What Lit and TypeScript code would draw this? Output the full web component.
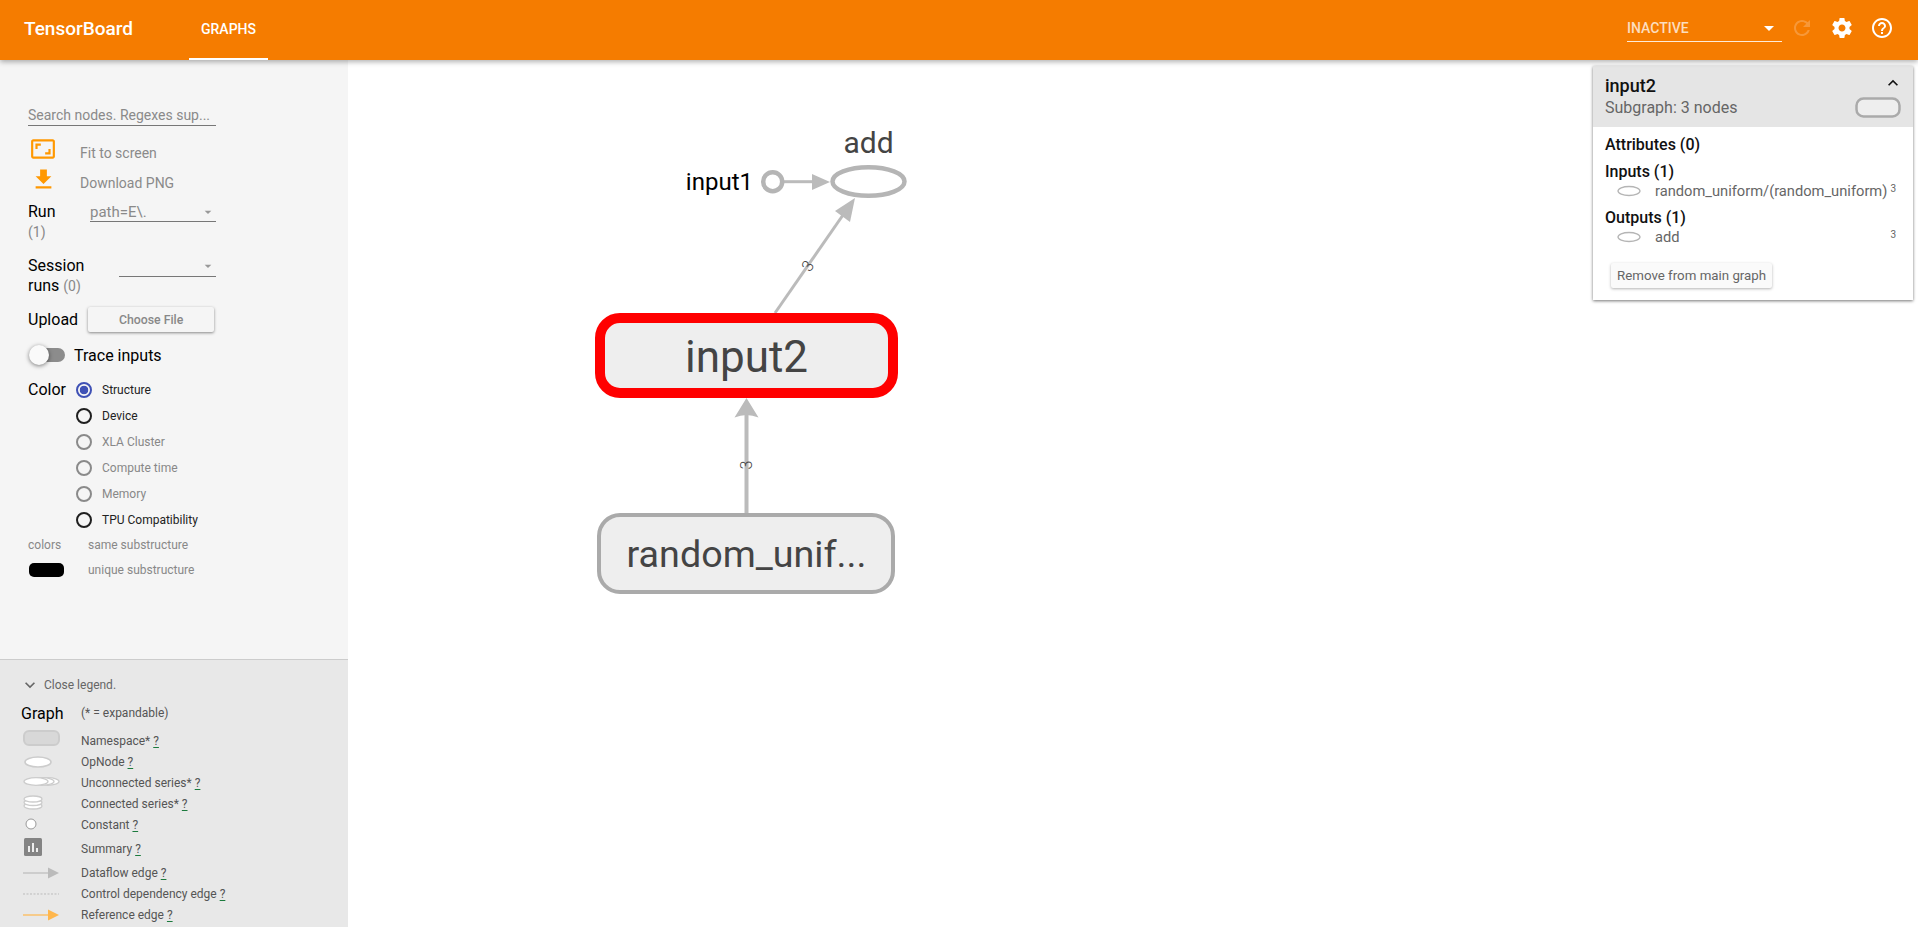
import { LitElement, css, html, svg } from "lit";
import { customElement } from "lit/decorators.js";

const ICONS = {
  settings:
    "M19.43 12.98c.04-.32.07-.64.07-.98s-.03-.66-.07-.98l2.11-1.65c.19-.15.24-.42.12-.64l-2-3.46c-.12-.22-.39-.3-.61-.22l-2.49 1c-.52-.4-1.08-.73-1.69-.98l-.38-2.65C14.46 2.18 14.25 2 14 2h-4c-.25 0-.46.18-.49.42l-.38 2.65c-.61.25-1.17.59-1.69.98l-2.49-1c-.23-.09-.49 0-.61.22l-2 3.46c-.13.22-.07.49.12.64l2.11 1.65c-.04.32-.07.65-.07.98s.03.66.07.98l-2.11 1.65c-.19.15-.24.42-.12.64l2 3.46c.12.22.39.3.61.22l2.49-1c.52.4 1.08.73 1.69.98l.38 2.65c.03.24.24.42.49.42h4c.25 0 .46-.18.49-.42l.38-2.65c.61-.25 1.17-.59 1.69-.98l2.49 1c.23.09.49 0 .61-.22l2-3.46c.12-.22.07-.49-.12-.64l-2.11-1.65zM12 15.5c-1.93 0-3.5-1.57-3.5-3.5s1.57-3.5 3.5-3.5 3.5 1.57 3.5 3.5-1.57 3.5-3.5 3.5z",
  help: "M11 18h2v-2h-2v2zm1-16C6.48 2 2 6.48 2 12s4.48 10 10 10 10-4.48 10-10S17.52 2 12 2zm0 18c-4.41 0-8-3.59-8-8s3.59-8 8-8 8 3.59 8 8-3.59 8-8 8zm0-14c-2.21 0-4 1.79-4 4h2c0-1.1.9-2 2-2s2 .9 2 2c0 2-3 1.75-3 5h2c0-2.25 3-2.5 3-5 0-2.21-1.79-4-4-4z",
  refresh:
    "M17.65 6.35C16.2 4.9 14.21 4 12 4c-4.42 0-7.99 3.58-7.99 8s3.57 8 7.99 8c3.73 0 6.84-2.55 7.73-6h-2.08c-.82 2.33-3.04 4-5.65 4-3.31 0-6-2.69-6-6s2.69-6 6-6c1.66 0 3.14.69 4.22 1.78L13 11h7V4l-2.35 2.35z",
  fit: "M19 12h-2v3h-3v2h5v-5zM7 9h3V7H5v5h2V9zm14-6H3c-1.1 0-2 .9-2 2v14c0 1.1.9 2 2 2h18c1.1 0 2-.9 2-2V5c0-1.1-.9-2-2-2zm0 16.01H3V4.99h18v14.02z",
  download: "M19 9h-4V3H9v6H5l7 7 7-7zM5 18v2h14v-2H5z",
  down: "M7.41 8.59L12 13.17l4.59-4.58L18 10l-6 6-6-6 1.41-1.41z",
  up: "M7.41 15.41L12 10.83l4.59 4.58L18 14l-6-6-6 6z",
  caret: "M7 10l5 5 5-5z",
};

const icon = (d: string, size: number, cls = "") =>
  html`<svg class=${cls} width=${size} height=${size} viewBox="0 0 24 24" fill="currentColor"><path d=${d}></path></svg>`;

const RADIOS = [
  { label: "Structure", state: "checked" },
  { label: "Device", state: "" },
  { label: "XLA Cluster", state: "off" },
  { label: "Compute time", state: "off" },
  { label: "Memory", state: "off" },
  { label: "TPU Compatibility", state: "" },
];

const LEGEND = [
  {
    label: "Namespace*",
    h: 21,
    art: svg`<rect x="3" y="-1" width="35" height="14" rx="5" fill="#d8d8d8" stroke="#ccc" stroke-width="2"/>`,
  },
  {
    label: "OpNode",
    h: 21,
    art: svg`<ellipse cx="17" cy="9" rx="13" ry="5" fill="#fff" stroke="#ccc" stroke-width="1.600"/>`,
  },
  {
    label: "Unconnected series*",
    h: 21,
    art: svg`<g fill="#fff" stroke="#ccc" stroke-width="1.300"><ellipse cx="27" cy="7.500" rx="11" ry="3.800"/><ellipse cx="21" cy="7.500" rx="12" ry="3.800"/><ellipse cx="15" cy="7.500" rx="12" ry="3.800"/></g>`,
  },
  {
    label: "Connected series*",
    h: 21,
    art: svg`<g fill="#fff" stroke="#ccc" stroke-width="1.300"><ellipse cx="12" cy="11" rx="9" ry="3"/><ellipse cx="12" cy="7.500" rx="9" ry="3"/><ellipse cx="12" cy="4" rx="9" ry="3"/></g>`,
  },
  {
    label: "Constant",
    h: 21,
    art: svg`<circle cx="10" cy="8" r="5" fill="#fff" stroke="#999" stroke-width="1"/>`,
  },
  {
    label: "Summary",
    h: 27,
    art: svg`<rect x="3" y="-2" width="18" height="18" rx="1.500" fill="#848484"/><path d="M7 6h2v6H7zM11 3h2v9h-2zM15 8h2v4h-2z" fill="#eee"/>`,
  },
  {
    label: "Dataflow edge",
    h: 21,
    art: svg`<path d="M2 9h27" stroke="#bbb" stroke-width="1.200"/><path d="M38 9l-11-5.500 0 11z" fill="#bbb"/>`,
  },
  {
    label: "Control dependency edge",
    h: 21,
    art: svg`<path d="M2 9h36" stroke="#bbb" stroke-width="1" stroke-dasharray="2 1.500"/>`,
  },
  {
    label: "Reference edge",
    h: 21,
    art: svg`<path d="M2 9h27" stroke="#ffb74d" stroke-width="1.200"/><path d="M38 9l-11-5.500 0 11z" fill="#ffb74d"/>`,
  },
];

@customElement("app-root")
export class AppRoot extends LitElement {
  static styles = css`
    :host {
      display: flex;
      flex-direction: column;
      height: 927px;
      overflow: hidden;
      font-family: Roboto, sans-serif;
      background: #fff;
    }
    .toolbar {
      position: relative;
      z-index: 2;
      flex: none;
      display: flex;
      align-items: center;
      height: 60px;
      padding-left: 24px;
      background: #f57c00;
      color: #fff;
      box-shadow: 0 2px 5px rgba(0, 0, 0, 0.3);
    }
    .brand {
      width: 165px;
      margin-bottom: 4px;
      font-size: 19px;
      font-weight: 500;
    }
    .tab {
      display: flex;
      align-items: center;
      justify-content: center;
      width: 79px;
      height: 58px;
      border-bottom: 2px solid #fff;
      font-size: 14px;
      font-weight: 500;
    }
    .top-right {
      display: flex;
      align-items: center;
      margin-left: auto;
    }
    .inactive {
      display: flex;
      align-items: center;
      justify-content: space-between;
      box-sizing: border-box;
      width: 155px;
      height: 28px;
      margin-top: -4px;
      border-bottom: 1px solid rgba(255, 255, 255, 0.85);
      font-size: 14px;
      font-weight: 500;
      color: rgba(255, 255, 255, 0.75);
    }
    .inactive svg {
      color: #fff;
      margin-right: 1px;
    }
    .refresh {
      margin: 0 16px 0 8px;
      color: rgba(255, 255, 255, 0.22);
    }
    .gear {
      margin: 0 16px 0 0;
    }
    .helpicon {
      margin-right: 24px;
    }
    .main {
      flex: 1;
      display: flex;
      min-height: 0;
    }
    .side {
      flex: none;
      width: 348px;
      display: flex;
      flex-direction: column;
      background: #f5f5f5;
    }
    .controls {
      flex: 1;
      padding: 46px 132px 0 28px;
      min-height: 0;
    }
    .search {
      height: 19px;
      border-bottom: 1px solid #777;
      font-size: 14px;
      line-height: 18px;
      color: #8a8a8a;
      white-space: nowrap;
    }
    .actions {
      margin-top: 12px;
    }
    .action {
      display: flex;
      align-items: center;
      height: 30px;
      font-size: 14px;
      color: #8a8a8a;
    }
    .action .ic {
      flex: none;
      display: flex;
      justify-content: center;
      width: 30px;
      margin-right: 22px;
      margin-bottom: 8px;
      color: #ff9800;
    }
    .run {
      display: flex;
      margin-top: 4px;
      font-size: 16px;
      color: #000;
    }
    .run-label {
      line-height: 20px;
      flex: none;
    }
    .count {
      font-size: 14px;
      color: #888;
    }
    .select {
      display: flex;
      align-items: center;
      justify-content: space-between;
      box-sizing: border-box;
      height: 20px;
      margin-left: auto;
      border-bottom: 1px solid #777;
      font-size: 15px;
      color: #8a8a8a;
    }
    .select svg {
      color: #999;
    }
    .run .select {
      width: 126px;
    }
    .session {
      margin-top: 14px;
    }
    .session .select {
      width: 97px;
      height: 21px;
      justify-content: flex-end;
    }
    .upload {
      display: flex;
      align-items: center;
      margin-top: 10px;
      height: 27px;
      font-size: 16px;
      color: #000;
    }
    .choose {
      display: flex;
      align-items: center;
      justify-content: center;
      flex: none;
      width: 126px;
      height: 25px;
      margin-left: 10px;
      background: #f5f5f5;
      border-radius: 2px;
      font-size: 12.300px;
      font-weight: 500;
      color: #888;
      box-shadow: 0 1px 3px rgba(0, 0, 0, 0.45);
    }
    .trace {
      display: flex;
      align-items: center;
      margin-top: 12px;
      height: 20px;
      font-size: 16px;
      color: #000;
      white-space: nowrap;
    }
    .track {
      position: relative;
      flex: none;
      width: 35px;
      height: 14px;
      margin-left: 2px;
      border-radius: 7px;
      background: #8c8c8c;
    }
    .thumb {
      position: absolute;
      left: -1px;
      top: -3px;
      width: 20px;
      height: 20px;
      border-radius: 50%;
      background: #fafafa;
      box-shadow: 0 1px 4px rgba(0, 0, 0, 0.5);
    }
    .trace span {
      margin-left: 9px;
    }
    .color {
      display: flex;
      margin-top: 12px;
    }
    .color-label {
      flex: none;
      width: 48px;
      font-size: 16px;
      line-height: 26px;
      color: #000;
    }
    .radio {
      display: flex;
      align-items: center;
      height: 26px;
      font-size: 12px;
      color: #222;
      white-space: nowrap;
    }
    .radio.off {
      color: #888;
    }
    .dot {
      flex: none;
      box-sizing: border-box;
      width: 16px;
      height: 16px;
      margin-right: 10px;
      border: 2px solid #1f1f1f;
      border-radius: 50%;
    }
    .radio.off .dot {
      border-color: #8a8a8a;
    }
    .radio.checked .dot {
      border-color: #3f51b5;
      background: radial-gradient(circle, #3f51b5 0 4px, transparent 4.600px);
    }
    .substs {
      margin-top: -1px;
    }
    .subst {
      display: flex;
      align-items: center;
      height: 25px;
      font-size: 12px;
      color: #888;
      white-space: nowrap;
    }
    .subst-key {
      flex: none;
      width: 60px;
    }
    .pill {
      flex: none;
      width: 35px;
      height: 14px;
      margin-left: 1px;
      margin-right: 24px;
      border-radius: 5px;
      background: #000;
    }
    .legend {
      flex: none;
      box-sizing: border-box;
      height: 268px;
      padding: 17px 0 0 21px;
      border-top: 1px solid #ccc;
      background: #e8e8e8;
      font-size: 12px;
      color: #555;
      overflow: hidden;
    }
    .close {
      display: flex;
      align-items: center;
      height: 16px;
      margin-left: -1px;
      color: #666;
    }
    .close svg {
      margin-right: 4px;
    }
    .graph-row {
      display: flex;
      align-items: center;
      height: 24px;
      margin-top: 8px;
      margin-bottom: 5.500px;
    }
    .graph-row b {
      width: 60px;
      font-size: 16px;
      font-weight: 400;
      color: #000;
    }
    .row {
      display: flex;
      align-items: center;
    }
    .row svg {
      flex: none;
      width: 60px;
      height: 18px;
      overflow: visible;
    }
    .row u {
      text-decoration-color: #1b7a3d;
      text-underline-offset: 2px;
    }
    .canvas {
      position: relative;
      flex: 1;
      min-width: 0;
      background: #fff;
    }
    .graph {
      display: block;
      width: 100%;
      height: 100%;
      font-family: Roboto, sans-serif;
    }
    .panel {
      position: absolute;
      top: 6px;
      right: 5px;
      width: 320px;
      height: 234px;
      background: #fff;
      box-shadow: 0 1px 3px rgba(0, 0, 0, 0.55);
    }
    .panel-head {
      position: relative;
      box-sizing: border-box;
      height: 61px;
      padding: 9px 12px;
      background: #e5e5e5;
    }
    .panel-title {
      font-size: 18px;
      font-weight: 500;
      line-height: 22px;
      color: #111;
    }
    .panel-sub {
      font-size: 16px;
      line-height: 22px;
      color: #666;
    }
    .panel-up {
      position: absolute;
      top: 7px;
      right: 10px;
      color: #111;
    }
    .panel-node {
      position: absolute;
      top: 31px;
      right: 12px;
    }
    .panel-body {
      padding: 9px 12px 0;
    }
    .sec {
      font-size: 16px;
      font-weight: 500;
      line-height: 18px;
      color: #111;
    }
    .sec + .sec,
    .item + .sec {
      margin-top: 9px;
    }
    .item {
      display: flex;
      align-items: center;
      height: 19px;
      font-size: 14.700px;
      color: #666;
      white-space: nowrap;
    }
    .item svg {
      flex: none;
      margin-left: 12px;
      margin-right: 14px;
    }
    .item sup {
      margin-left: auto;
      margin-right: 5px;
      font-size: 10px;
      line-height: 10px;
      align-self: flex-start;
      margin-top: 3px;
    }
    .remove {
      width: fit-content;
      margin: 17px 0 0 6px;
      padding: 0 6px;
      height: 25px;
      line-height: 25px;
      border-radius: 2px;
      background: #fafafa;
      font-size: 13.300px;
      color: #666;
      box-shadow: 0 1px 3px rgba(0, 0, 0, 0.3);
    }
  `;

  renderGraph() {
    return svg`
      <g fill="#bbb" stroke="none">
        <path d="M830 182l-18-8v16z"/>
        <path d="M855 198l-20 13 15 11z"/>
        <path d="M746.500 398l-12 19.500q12-5 24 0z"/>
      </g>
      <g stroke="#bbb" stroke-width="3" fill="none">
        <path d="M782 181.700h32"/>
        <path d="M775 313l68-98"/>
      </g>
      <path d="M746.500 513v-100" stroke="#bbb" stroke-width="4" fill="none"/>
      <circle cx="772.700" cy="181.700" r="9.500" fill="#fff" stroke="#b5b5b5" stroke-width="4.500"/>
      <ellipse cx="868.500" cy="181.500" rx="36" ry="14.300" fill="#fff" stroke="#b5b5b5" stroke-width="4.500"/>
      <rect x="600" y="318" width="293" height="75" rx="20" fill="#eee" stroke="#f00" stroke-width="10"/>
      <rect x="599" y="515" width="294" height="77" rx="21" fill="#eee" stroke="#aaa" stroke-width="4"/>
      <g fill="#444" text-anchor="middle">
        <text x="868.500" y="153" font-size="30">add</text>
        <text x="746.500" y="372" font-size="44">input2</text>
        <text x="746.500" y="567" font-size="37.700">random_unif...</text>
        <text transform="translate(812.400 269) rotate(-55)" font-size="16" font-weight="300">3</text>
        <text transform="translate(751.700 465) rotate(-90)" font-size="16" font-weight="300">3</text>
      </g>
      <text x="753" y="190" font-size="24" fill="#000" text-anchor="end">input1</text>
    `;
  }

  render() {
    return html`
      <header class="toolbar">
        <div class="brand">TensorBoard</div>
        <div class="tab">GRAPHS</div>
        <div class="top-right">
          <div class="inactive">INACTIVE ${icon(ICONS.caret, 24)}</div>
          <span class="refresh">${icon(ICONS.refresh, 24)}</span>
          <span class="gear">${icon(ICONS.settings, 24)}</span>
          <span class="helpicon">${icon(ICONS.help, 24)}</span>
        </div>
      </header>
      <div class="main">
        <aside class="side">
          <div class="controls">
            <div class="search">Search nodes. Regexes sup...</div>
            <div class="actions">
              <div class="action"><span class="ic">${icon(ICONS.fit, 26)}</span>Fit to screen</div>
              <div class="action"><span class="ic">${icon(ICONS.download, 27)}</span>Download PNG</div>
            </div>
            <div class="run">
              <div class="run-label">Run<br /><span class="count">(1)</span></div>
              <div class="select">path=E\\. ${icon(ICONS.caret, 16)}</div>
            </div>
            <div class="run session">
              <div class="run-label">Session<br />runs <span class="count">(0)</span></div>
              <div class="select">${icon(ICONS.caret, 16)}</div>
            </div>
            <div class="upload">Upload<div class="choose">Choose File</div></div>
            <div class="trace"><div class="track"><div class="thumb"></div></div><span>Trace inputs</span></div>
            <div class="color">
              <div class="color-label">Color</div>
              <div>
                ${RADIOS.map(
                  (r) => html`<div class="radio ${r.state}"><div class="dot"></div>${r.label}</div>`
                )}
              </div>
            </div>
            <div class="substs">
              <div class="subst"><div class="subst-key">colors</div>same substructure</div>
              <div class="subst"><div class="pill"></div>unique substructure</div>
            </div>
          </div>
          <div class="legend">
            <div class="close">${icon(ICONS.down, 20)}Close legend.</div>
            <div class="graph-row"><b>Graph</b>(* = expandable)</div>
            ${LEGEND.map(
              (l) => html`<div class="row" style="height:${l.h}px">
                <svg viewBox="0 0 60 18">${l.art}</svg>${l.label}&nbsp;<u>?</u>
              </div>`
            )}
          </div>
        </aside>
        <section class="canvas">
          <svg class="graph" viewBox="348 60 1570 867">${this.renderGraph()}</svg>
          <div class="panel">
            <div class="panel-head">
              <div class="panel-title">input2</div>
              <div class="panel-sub">Subgraph: 3 nodes</div>
              <span class="panel-up">${icon(ICONS.up, 20)}</span>
              <svg class="panel-node" width="46" height="21">
                <rect x="1.500" y="1.500" width="43" height="18" rx="7" fill="#eee" stroke="#aaa" stroke-width="2.500"/>
              </svg>
            </div>
            <div class="panel-body">
              <div class="sec">Attributes (0)</div>
              <div class="sec">Inputs (1)</div>
              <div class="item">
                <svg width="24" height="12"><ellipse cx="12" cy="6" rx="11" ry="4.500" fill="none" stroke="#b5b5b5" stroke-width="1.300"/></svg>
                random_uniform/(random_uniform)<sup>3</sup>
              </div>
              <div class="sec">Outputs (1)</div>
              <div class="item">
                <svg width="24" height="12"><ellipse cx="12" cy="6" rx="11" ry="4.500" fill="none" stroke="#b5b5b5" stroke-width="1.300"/></svg>
                add<sup>3</sup>
              </div>
              <div class="remove">Remove from main graph</div>
            </div>
          </div>
        </section>
      </div>
    `;
  }
}
